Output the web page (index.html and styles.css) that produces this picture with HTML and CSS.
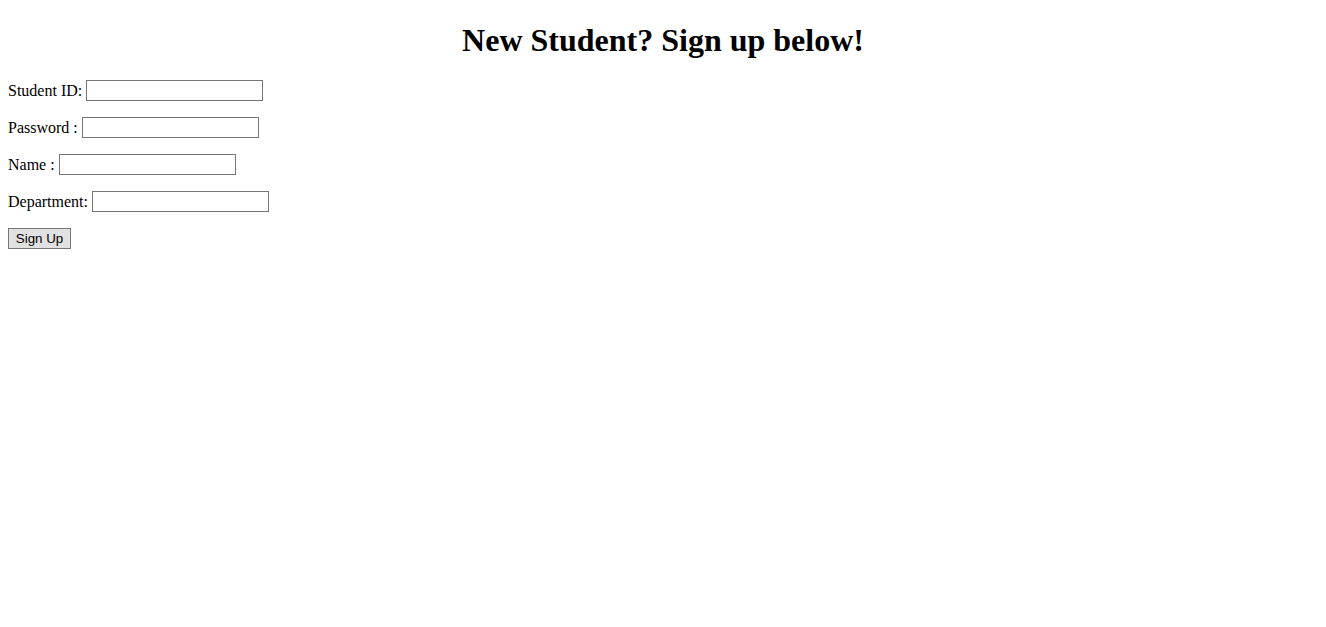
FILE: index.html
```html
<!DOCTYPE html>
<html>
<head>
<meta charset="utf-8">
<title>Sign Up</title>
<link rel="stylesheet" href="styles.css">
</head>
<body>
<h1 class="title">New Student? Sign up below!</h1>
<form class="form">
<p class="row">Student ID: <input class="field" type="text"></p>
<p class="row">Password : <input class="field" type="password"></p>
<p class="row">Name : <input class="field" type="text"></p>
<p class="row">Department: <input class="field" type="text"></p>
<button class="btn" type="button">Sign Up</button>
</form>
</body>
</html>
```
FILE: styles.css
```css
html, body {
  background: #fff;
}
body {
  margin: 8px;
  font-family: "Liberation Serif", "Times New Roman", serif;
  font-size: 16px;
  color: #000;
}
.title {
  text-align: center;
  font-size: 32px;
  font-weight: bold;
  margin: 14px 0 21px;
  line-height: 37px;
}
.form {
  margin: 0;
}
.row {
  margin: 16px 0;
  line-height: 21px;
  height: 21px;
}
.field {
  box-sizing: border-box;
  width: 177px;
  height: 21px;
  border: 1px solid #767676;
  padding: 1px 2px;
  margin: 0;
  vertical-align: bottom;
  font-family: "Liberation Sans", Arial, sans-serif;
  font-size: 13.33px;
  background: #fff;
}
.btn {
  box-sizing: border-box;
  height: 21px;
  width: 63px;
  padding: 0;
  margin: 0;
  border: 1px solid #767676;
  background: #e1e1e1;
  font-family: "Liberation Sans", Arial, sans-serif;
  font-size: 13.33px;
  color: #000;
  line-height: 19px;
}
```
